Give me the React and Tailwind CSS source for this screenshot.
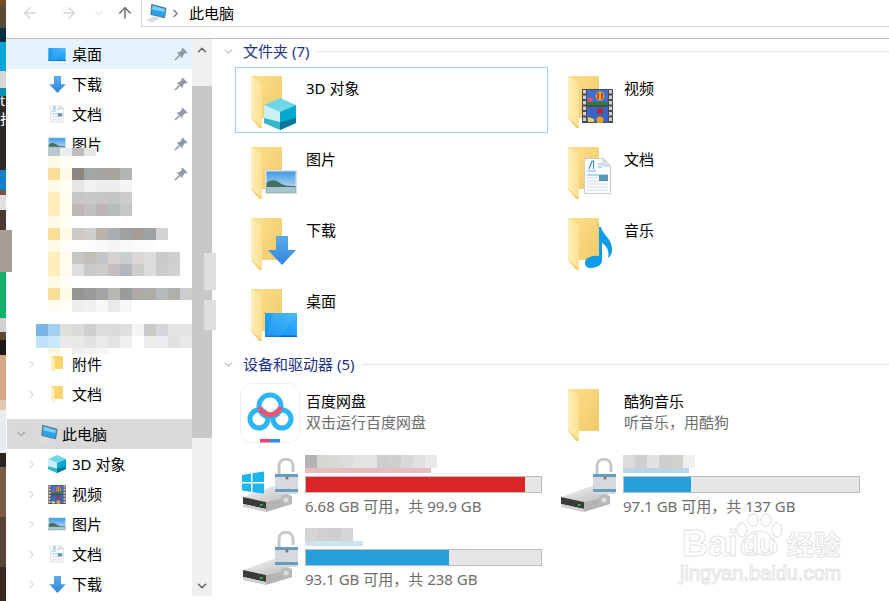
import React from 'react';
import { ArrowLeft, ArrowRight, ArrowUp, ChevronDown, ChevronRight, ChevronUp } from 'lucide-react';

const font = { fontFamily: '"Noto Sans", "Noto Sans CJK SC", sans-serif' };

// pixelated patches over the private folder names in the nav pane
const mosaic = [
  { h: 8, x: 48, c: ['#b9c8cc', '#e9eeee', '#c0bebb', '#e8e6e5'] },
  { h: 12, x: 48, c: ['#fff9e8', '#fffdf5'] },
  { h: 12, x: 48, c: ['#fbdf97', '#fffbe9', '#8d8784', '#a2a6a5', '#a6a4a2', '#a6a29e', '#b3b6b7'] },
  { h: 12, x: 48, c: ['#fff9e8', '#fffdf6', '#e6e6e6', '#f1f1f1', '#eeeeee', '#eeeeee', '#f5f5f5'] },
  { h: 12, x: 48, c: ['#fdeebb', '#fffcef', '#c8c6c4', '#cac8c7', '#c8c5c5', '#c4c6c4', '#cbcbcc'] },
  { h: 12, x: 48, c: ['#fdeebb', '#fffcef', '#bcb8b6', '#c2c0c0', '#b9b5b8', '#b7bcbc', '#c6c6c8'] },
  { h: 12, x: 48, c: ['#fff9e8', '#fffdf6'] },
  { h: 12, x: 48, c: ['#fbdf97', '#fffbe9', '#ccc9c7', '#d0cfcd', '#b9b3ae', '#abaeb0', '#9fa0a2', '#a39d98', '#9fa2a5', '#d3d3d6'] },
  { h: 12, x: 48, c: ['#fff9e8', '#fffdf8', '#fdfdfd', '#fcfcfc', '#f9f9f9', '#f4f4f5', '#f8f8f8', '#fbfbfb', '#fcfcfc'] },
  { h: 12, x: 48, c: ['#fdeebb', '#fffcef', '#c8c6c3', '#c2bfba', '#c3c5c8', '#d6d2d0', '#c9ced1', '#d9d6d4', '#dcdcdc', '#cbc9c9', '#cfcfd0'] },
  { h: 12, x: 48, c: ['#fdeebb', '#fffcef', '#dedede', '#cbc9c7', '#cccdc8', '#c4bfbe', '#b3b8bc', '#cfcdca', '#dddddd', '#cdcacb', '#d2d1d2'] },
  { h: 12, x: 48, c: ['#fff9e8', '#fffdf6'] },
  { h: 12, x: 48, c: ['#fbdf97', '#fffbe9', '#979591', '#9c9b9b', '#a2a4a6', '#b8b6b2', '#9a9b9d', '#aeaba7', '#aeaca7', '#b7babc', '#b1afaa', '#cdced0'] },
  { h: 12, x: 48, c: ['#fffdf3', '#fffef9', '#eeeeee', '#eff0f2', '#f7f7f7', '#e9ebea', '#f6f6f6'] },
  { h: 12, x: 48, c: [] },
  { h: 12, x: 36, c: ['#7ab5e6', '#a5cfee', '#e0dedb', '#d9dadb', '#cfcfcf', '#dcdcdc', '#dcdbda', '#dddee0', '#f5f5f5', '#cbc9c7', '#d5d6d9', '#e4e4e4', '#e4e4e4'] },
  { h: 12, x: 36, c: ['#c0e2f8', '#cce9fc', '#ebe9e7', '#e7e9e9', '#e2e2e2', '#e9ebea', '#e3e3e3', '#efefef', '#ffffff', '#edecea', '#eaecef', '#e3e2e0', '#e8eaea'] },
  { h: 6, x: 48, c: ['#fff5dc', '#fffdf5', '#eeeeee', '#f3f3f5', '#f5f5f5'] },
];

// desktop wallpaper peeking out on the left edge
const strip = [
  [5, '#7a4a20'], [23, '#5a4a38'], [14, '#08303c'], [29, '#06a7d8'], [17, '#d8d8d8'], [8, '#0a8fb0'],
  [74, '#2e2a25'], [20, '#1581c6'], [5, '#70584c'], [15, '#e2e0de'], [20, '#4a3a32'], [42, '#a89c96'],
  [46, '#0fb26b'], [14, '#d0d0d0'], [8, '#5a4a3c'], [15, '#1c1a18'], [45, '#d9a77f'], [10, '#e0c8b4'],
  [43, '#e8ecef'], [14, '#2a2420'], [50, '#7a5c48'], [50, '#5a4436'], [43, '#3a2a22'],
];

const FolderDefs = () => (
  <svg className="absolute w-0 h-0">
    <defs>
      <linearGradient id="fback" x1="0" y1="0" x2="1" y2="1">
        <stop offset="0" stopColor="#fde08d" />
        <stop offset="1" stopColor="#eec765" />
      </linearGradient>
      <linearGradient id="fleaf" x1="0" y1="0" x2="1" y2="0">
        <stop offset="0" stopColor="#fff0b8" />
        <stop offset="1" stopColor="#fcdf92" />
      </linearGradient>
      <linearGradient id="sky" x1="0" y1="0" x2="0" y2="1">
        <stop offset="0" stopColor="#3f9be6" />
        <stop offset="1" stopColor="#d5e8f5" />
      </linearGradient>
      <linearGradient id="blue" x1="0" y1="1" x2="1" y2="0">
        <stop offset="0" stopColor="#0b8cf0" />
        <stop offset="1" stopColor="#3db6fb" />
      </linearGradient>
      <linearGradient id="arrow" x1="0" y1="0" x2="0" y2="1">
        <stop offset="0" stopColor="#5cabea" />
        <stop offset="1" stopColor="#2f86dc" />
      </linearGradient>
      <linearGradient id="drive" x1="0" y1="0" x2="1" y2="1">
        <stop offset="0" stopColor="#f4f4f4" />
        <stop offset="1" stopColor="#bdbdbd" />
      </linearGradient>
    </defs>
  </svg>
);

const Cube = (p) => (
  <svg viewBox="0 0 32 32" {...p}>
    <path d="M16 0 32 7 16 14 0 7Z" fill="#6fd6e9" />
    <path d="M0 7 16 14V32L0 25Z" fill="#cbf0f4" />
    <path d="M0 20 16 24V32L0 25Z" fill="#37b5c9" />
    <path d="M32 7 16 14V32L32 25Z" fill="#00a9d0" />
    <path d="M32 20 16 24V32L32 25Z" fill="#07799a" />
  </svg>
);

const Pic = (p) => (
  <svg viewBox="0 0 32 24" {...p}>
    <rect width="32" height="24" fill="#dcdfe0" />
    <rect x="1.5" y="1.5" width="29" height="21" fill="url(#sky)" />
    <path d="M1.5 13C6 9 11 10 15 13S24 16 30.5 16V22.5H1.5Z" fill="#47705f" />
    <path d="M1.5 17H30.5V22.5H1.5Z" fill="#a9c4cf" />
  </svg>
);

const Film = (p) => (
  <svg viewBox="0 0 31 34" {...p}>
    <rect width="31" height="34" fill="#4b4b4b" />
    {[1, 6.5, 12, 17.5, 23, 28.5].map((y) => (
      <g key={y}>
        <rect x="1" y={y} width="3" height="3.5" fill="#cfcfcf" />
        <rect x="27" y={y} width="3" height="3.5" fill="#cfcfcf" />
      </g>
    ))}
    <rect x="5" y="1" width="21" height="15" fill="#3f6fd0" />
    <rect x="5" y="18" width="21" height="15" fill="#3a63c4" />
    <rect x="5" y="13" width="21" height="3" fill="#2d7d3a" />
    <circle cx="18" cy="7" r="4.5" fill="#e8a020" />
    <path d="M16 4V10M20 4V10" stroke="#c0281c" strokeWidth="1.4" />
    <circle cx="18" cy="22" r="3" fill="#c0281c" />
    <circle cx="18" cy="31" r="3.5" fill="#e8a020" />
    <path d="M6 8 12 10 9 13H6Z" fill="#e0506a" />
    <path d="M6 28 12 30V33H6Z" fill="#e8d060" />
  </svg>
);

const Doc = (p) => (
  <svg viewBox="0 0 27 36" {...p}>
    <path d="M.5.5H19L26.5 8V35.5H.5Z" fill="#fbfcfd" stroke="#c9cdd0" />
    <path d="M19 .5V8H26.5Z" fill="#dfe3e6" stroke="#c9cdd0" />
    <path d="M3 13H12M14 6H18M14 9H18M3 17H24" stroke="#6cb4ea" strokeWidth="1" />
    <path d="M3 20H14M3 23H24M3 26H24M3 29H24M3 32H24" stroke="#d5dade" strokeWidth="1" />
    <path d="M5 11 8 3H9.5L9.5 11" fill="none" stroke="#3d8fd8" strokeWidth="1.2" />
    <rect x="15" y="17" width="9" height="6" fill="#5c94b4" />
  </svg>
);

const DownArrow = (p) => (
  <svg viewBox="0 0 28 29" {...p}>
    <path d="M8 0H20V14H28L14 29 0 14H8Z" fill="url(#arrow)" />
  </svg>
);

const Desk = (p) => (
  <svg viewBox="0 0 32 24" {...p}>
    <rect width="32" height="24" fill="url(#blue)" />
    <rect y="22.5" width="32" height="1.5" fill="#0a6dc0" />
    <path d="M0 24 9 0H32V2L14 24Z" fill="#fff" fillOpacity=".08" />
  </svg>
);

const Note = (p) => (
  <svg viewBox="0 0 28 43" {...p}>
    <path d="M14 2H16C17 9 28 14 27 26 26.600 29 25 32 23 33 25 26 21 20 17 18V36C17 40 11 43 6 43 2 43 0 41 0 38 0 33 7 30 14 31Z" fill="#0d9bec" />
  </svg>
);

const Folder = ({ children }) => (
  <svg width="55" height="56" viewBox="0 0 55 56" className="shrink-0">
    <path d="M0 0H31V42H11V52H8L0 42Z" fill="url(#fback)" />
    <rect x="11" y="42" width="8" height="3" fill="#fff" />
    <path d="M0 0 11 7V51L0 41Z" fill="url(#fleaf)" />
    {children}
  </svg>
);

const SmallFolder = () => (
  <svg width="14" height="17" viewBox="0 0 14 17">
    <path d="M1 0H13V13H4V16L1 13Z" fill="#fbd46f" />
    <path d="M1 0 4.500 2V16L1 13Z" fill="#ffefb5" />
  </svg>
);

const PcIcon = ({ width = 21, height = 20 }) => (
  <svg width={width} height={height} viewBox="0 0 22 20">
    <path d="M6 1 21 5 19.500 15 5 11.500Z" fill="#28a4ee" stroke="#4d5a63" strokeWidth=".8" />
    <path d="M7 2.500 20 6 19 9 6.500 6Z" fill="#7fd0fa" />
    <path d="M0 17 9 13.500 15 15.500 6 20Z" fill="#dcdcdc" />
  </svg>
);

const PinIcon = () => (
  <svg width="14" height="14" viewBox="0 0 14 14" className="shrink-0 ml-auto mr-[4px]">
    <path d="M8.500 .5 13.500 5.500 12 6.500 10.500 6.500 8.500 9.500 8.500 11.500 2.500 5.500 4.500 5.500 7.500 3.500 7.500 2Z" fill="#8f9aa6" />
    <path d="M5.500 8.500 1 13" stroke="#8f9aa6" strokeWidth="1.6" />
  </svg>
);

const NavRow = ({ icon, label, pinned, selected, chevron }) => (
  <div className={`h-[30px] flex items-center ${selected ? 'bg-[#e5f3ff]' : ''}`}>
    <div className="w-[41px] flex justify-end pr-[10px] shrink-0">
      {chevron && <ChevronRight size={13} strokeWidth={2} className="text-[#dcdcdc]" />}
    </div>
    <div className="w-[18px] mr-[6px] shrink-0 flex justify-center items-center">{icon}</div>
    {label && <span className="text-[15px] text-black">{label}</span>}
    {pinned && <PinIcon />}
  </div>
);

const Sidebar = () => (
  <div className="w-[185px] shrink-0">
    <NavRow icon={<Desk width="18" height="13" />} label="桌面" pinned selected />
    <NavRow icon={<DownArrow width="17" height="17" />} label="下载" pinned />
    <NavRow icon={<Doc width="14" height="18" />} label="文档" pinned />
    <NavRow icon={<Pic width="18" height="14" />} label="图片" pinned />
    <NavRow pinned />
    <div className="h-[160px]" />
    <NavRow icon={<SmallFolder />} label="附件" chevron />
    <NavRow icon={<SmallFolder />} label="文档" chevron />
    <div className="h-[10px]" />
    <div className="h-[30px] flex items-center bg-[#d9d9d9]">
      <div className="w-[30px] pl-[7px] shrink-0">
        <ChevronDown size={14} strokeWidth={2} className="text-[#a8a8a8]" />
      </div>
      <div className="w-[25px] shrink-0"><PcIcon /></div>
      <span className="text-[15px] text-black">此电脑</span>
    </div>
    <NavRow icon={<Cube width="18" height="18" />} label="3D 对象" chevron />
    <NavRow icon={<Film width="18" height="19" />} label="视频" chevron />
    <NavRow icon={<Pic width="18" height="14" />} label="图片" chevron />
    <NavRow icon={<Doc width="14" height="18" />} label="文档" chevron />
    <NavRow icon={<DownArrow width="17" height="17" />} label="下载" chevron />
  </div>
);

const Scrollbar = () => (
  <div className="w-[20px] h-[557px] bg-[#f0f0f0] flex flex-col shrink-0">
    <div className="h-[47px] pl-[3px] pt-[4px]">
      <ChevronUp size={14} strokeWidth={2.5} className="text-[#606060]" />
    </div>
    <div className="h-[352px] bg-[#c8c8c8]" />
    <div className="flex-1 flex items-end pl-[3px] pb-[3px]">
      <ChevronDown size={14} strokeWidth={2.5} className="text-[#606060]" />
    </div>
  </div>
);

const GroupHeader = ({ label, className = '' }) => (
  <div className={`h-[20px] flex items-center pl-[7px] ${className}`}>
    <ChevronDown size={13} strokeWidth={1.5} className="text-[#808080] shrink-0" />
    <span className="ml-[8px] text-[15px] text-[#1e3287] whitespace-pre">{label}</span>
    <div className="flex-1 ml-[8px] h-px bg-[#e3e3e3]" />
  </div>
);

const FolderTile = ({ label, selected, right, children }) => (
  <div className={`w-[313px] h-[66px] flex pl-[15px] pt-[8px] border ${selected ? 'border-[#99d1ff]' : 'border-transparent'}`}>
    <Folder>{children}</Folder>
    <span className={`text-[15px] text-black mt-[2px] h-[20px] leading-[20px] ${right ? 'ml-px' : ''}`}>{label}</span>
  </div>
);

const Cells = ({ colors, w = 12, h }) => (
  <div className="flex">
    {colors.map((color, i) => (
      <div key={i} style={{ width: w, height: h, backgroundColor: color }} />
    ))}
  </div>
);

const DriveIcon = ({ windows }) => (
  <svg width="60" height="54" viewBox="0 0 60 54" className="shrink-0">
    <path d="M2 39 33 28 51 38 25 44Z" fill="url(#drive)" />
    <path d="M2 39 25 44V51L2 46Z" fill="#3a3a3a" />
    <path d="M25 44 51 38V46L25 54Z" fill="#b4b4b4" />
    <path d="M2 46 25 51V54L2 49Z" fill="#cfcfcf" />
    <rect x="19" y="46" width="2.500" height="2" fill="#20c040" />
    <path d="M38 16V8C38 -1 52 -1 52 8V14" fill="none" stroke="#c3c8cb" strokeWidth="3" />
    <rect x="34" y="16" width="23" height="20" rx="2" fill="#d5dadd" />
    <rect x="34" y="16" width="23" height="3" fill="#6b9cc0" />
    <rect x="34" y="31" width="23" height="3" fill="#6b9cc0" />
    <circle cx="46" cy="20" r="1.500" fill="#777" />
    <circle cx="45" cy="42" r="5.500" fill="#b9b9b9" />
    <circle cx="45" cy="42" r="2.500" fill="#dedede" />
    {windows && (
      <g fill="#1cb5ee">
        <path d="M1 17 10 15.500V24H1Z" />
        <path d="M11.500 15.200 23 13.500V24H11.500Z" />
        <path d="M1 25.500H10V34L1 32.500Z" />
        <path d="M11.500 25.500H23V35.500L11.500 34.200Z" />
      </g>
    )}
  </svg>
);

const DriveTile = ({ free, fill, color, windows, top, under, blurW, lead = 6 }) => (
  <div className="h-[73px] flex">
    <div className="shrink-0" style={{ width: lead }} />
    <div className="pt-[3px]"><DriveIcon windows={windows} /></div>
    <div className="ml-[4px] w-[237px]">
      <div className="h-[20px] overflow-hidden">
        <Cells colors={top} h={13} />
        <div className="h-[5px]" style={{ width: blurW, backgroundColor: under }} />
      </div>
      <div className="h-[17px] mt-px border border-[#bcbcbc] bg-[#e6e6e6]">
        <div className="h-full" style={{ width: fill, backgroundColor: color }} />
      </div>
      <div className="mt-[3px] h-[20px] leading-[20px] text-[15px] text-[#6d6d6d] whitespace-pre">{free}</div>
    </div>
  </div>
);

const BaiduIcon = () => (
  <svg width="60" height="60" viewBox="0 0 60 60" className="shrink-0">
    <rect x=".5" y=".5" width="59" height="59" rx="11" fill="#fff" stroke="#eeeeee" />
    <g fill="none" stroke="#2cb5f5" strokeWidth="5">
      <circle cx="19" cy="36" r="9" />
      <circle cx="42" cy="36" r="9" />
      <circle cx="30" cy="23" r="11" />
    </g>
    <path d="M19.500 24A11 11 0 0 0 40.500 24" fill="none" stroke="#f0546e" strokeWidth="5" />
    <rect x="20" y="56" width="10" height="3.500" fill="#f5416d" />
    <rect x="30" y="56" width="10" height="3.500" fill="#2b8ff5" />
  </svg>
);

const Watermark = () => (
  <div className="absolute left-[680px] top-[513px] w-[170px] h-[72px] pointer-events-none">
    <svg width="50" height="44" viewBox="0 0 50 44" className="absolute left-[54px] top-0" fill="#fff" stroke="#e8e8e8" strokeWidth="1.5">
      <ellipse cx="8" cy="17" rx="5" ry="7" />
      <ellipse cx="19" cy="7" rx="5" ry="6.500" />
      <ellipse cx="32" cy="7" rx="5" ry="6.500" />
      <ellipse cx="43" cy="17" rx="5" ry="7" />
      <path d="M25 18C35 18 44 30 43 36 42 43 33 43 25 41 17 43 8 43 7 36 6 30 15 18 25 18Z" />
    </svg>
    <div className="absolute left-[2px] top-[13px] flex items-center h-[36px] leading-[36px] text-[36px] font-bold text-white [-webkit-text-stroke:1px_#e4e4e4] font-['Liberation_Sans',sans-serif]">
      <span>Bai</span>
      <span className="ml-[5px] text-[26px]">du</span>
      <span className="ml-[12px] text-[27px] font-['Noto_Sans_CJK_SC',sans-serif]">经验</span>
    </div>
    <div className="absolute left-0 top-[48px] h-[24px] leading-[24px] text-[20px] text-white [-webkit-text-stroke:1px_#e4e4e4] font-['Liberation_Sans',sans-serif]">
      jingyan.baidu.com
    </div>
  </div>
);

export default function App() {
  return (
    <div className="relative w-[889px] h-[601px] overflow-hidden bg-white flex" style={font}>
      <FolderDefs />

      {/* wallpaper edge */}
      <div className="w-[6px] shrink-0 flex flex-col">
        {strip.map(([h, color], i) => (
          <div key={i} className="shrink-0" style={{ height: h, backgroundColor: color }} />
        ))}
      </div>

      <div className="flex-1 flex flex-col min-w-0">
        {/* toolbar */}
        <div className="h-[39px] shrink-0 border-b border-[#bdbdbd] flex items-start pl-[15px]">
          <div className="h-[26px] flex items-center">
            <ArrowLeft size={18} strokeWidth={1.8} className="text-[#d6d6d6]" />
            <ArrowRight size={18} strokeWidth={1.8} className="ml-[21px] text-[#d6d6d6]" />
            <ChevronDown size={12} strokeWidth={2} className="ml-[15px] text-[#d6d6d6]" />
            <ArrowUp size={18} strokeWidth={2} className="ml-[11px] text-[#6e6e6e]" />
          </div>
          <div className="ml-[7px] flex-1 h-[27px] border-l border-b border-[#d9d9d9] flex items-center pl-[4px]">
            <PcIcon />
            <ChevronRight size={13} strokeWidth={2} className="ml-[2px] text-[#6e6e6e]" />
            <span className="ml-[7px] text-[15px] text-black">此电脑</span>
          </div>
        </div>

        <div className="flex-1 flex min-h-0">
          <div className="w-px shrink-0" />
          <Sidebar />
          <Scrollbar />

          {/* content */}
          <div className="flex-1 pl-[3px] min-w-0">
            <GroupHeader label="文件夹 (7)" className="mt-[2px]" />
            <div className="ml-[20px] mt-[6px] grid grid-cols-[317px_317px] gap-y-[5px]">
              <FolderTile label="3D 对象" selected><Cube x="13" y="22" width="32" height="32" /></FolderTile>
              <FolderTile label="视频" right><Film x="14" y="13" width="31" height="34" /></FolderTile>
              <FolderTile label="图片"><Pic x="14" y="23" width="32" height="24" /></FolderTile>
              <FolderTile label="文档" right><Doc x="16" y="11" width="27" height="36" /></FolderTile>
              <FolderTile label="下载"><DownArrow x="17" y="18" width="28" height="29" /></FolderTile>
              <FolderTile label="音乐" right><Note x="17" y="7" width="28" height="43" /></FolderTile>
              <FolderTile label="桌面"><Desk x="14" y="24" width="32" height="24" /></FolderTile>
            </div>
            <GroupHeader label="设备和驱动器 (5)" className="mt-[8px]" />
            <div className="ml-[20px] mt-[9px] grid grid-cols-[317px_317px]">
              <div className="h-[72px] flex pl-[5px]">
                <BaiduIcon />
                <div className="ml-[6px] pt-[8px] text-[15px] leading-[21px]">
                  <div className="text-black">百度网盘</div>
                  <div className="text-[#6d6d6d]">双击运行百度网盘</div>
                </div>
              </div>
              <div className="h-[72px] flex pl-[16px] pt-[6px]">
                <Folder />
                <div className="ml-px pt-[2px] text-[15px] leading-[21px]">
                  <div className="text-black">酷狗音乐</div>
                  <div className="text-[#6d6d6d]">听音乐，用酷狗</div>
                </div>
              </div>
              <DriveTile
                free="6.68 GB 可用，共 99.9 GB"
                fill={219}
                color="#da2626"
                windows
                top={['#b4b4b4', '#d6d6d2', '#d9d9d7', '#dcdcdc', '#e3e3e1', '#e3e3e3', '#cdcdd0', '#cfd0ce', '#d8d8d8', '#e0e0e0', '#e8eaea']}
                under="#e8bcbc"
                blurW={126}
              />
              <DriveTile
                free="97.1 GB 可用，共 137 GB"
                fill={67}
                color="#26a0da"
                lead={7}
                top={['#dcdcdc', '#cfcfcf', '#e2e2e2', '#cfcdcb', '#d2d0cd', '#eef0f2']}
                under="#b9d6e6"
                blurW={66}
              />
              <DriveTile
                free="93.1 GB 可用，共 238 GB"
                fill={143}
                color="#26a0da"
                top={['#d5d5d5', '#d0d0d0', '#cfcfcf', '#d5d5d5']}
                under="#cfe2ee"
                blurW={58}
              />
            </div>
          </div>
        </div>
      </div>

      {/* pixelated names, painted over the nav pane */}
      <div className="absolute left-0 top-[148px] w-[192px] overflow-hidden pointer-events-none">
        {mosaic.map((row, i) => (
          <div key={i} style={{ height: row.h, paddingLeft: row.x }}>
            <Cells colors={row.c} h={row.h} />
          </div>
        ))}
      </div>
      <div className="absolute left-[204px] top-[253px] w-[12px] h-[37px] bg-[#dedede]" />
      <div className="absolute left-[204px] top-[300px] w-[12px] h-[30px] bg-[#dedede]" />
      <div className="absolute left-0 top-[230px] w-[12px] h-[42px] bg-[#a89c96]" />

      {/* bits of desktop icon captions cut off by the window edge */}
      <div className="absolute left-0 top-[92px] w-[6px] h-[40px] overflow-hidden text-[14px] leading-[18px] text-white">
        <div>t</div>
        <div>扫</div>
      </div>

      <Watermark />
    </div>
  );
}
